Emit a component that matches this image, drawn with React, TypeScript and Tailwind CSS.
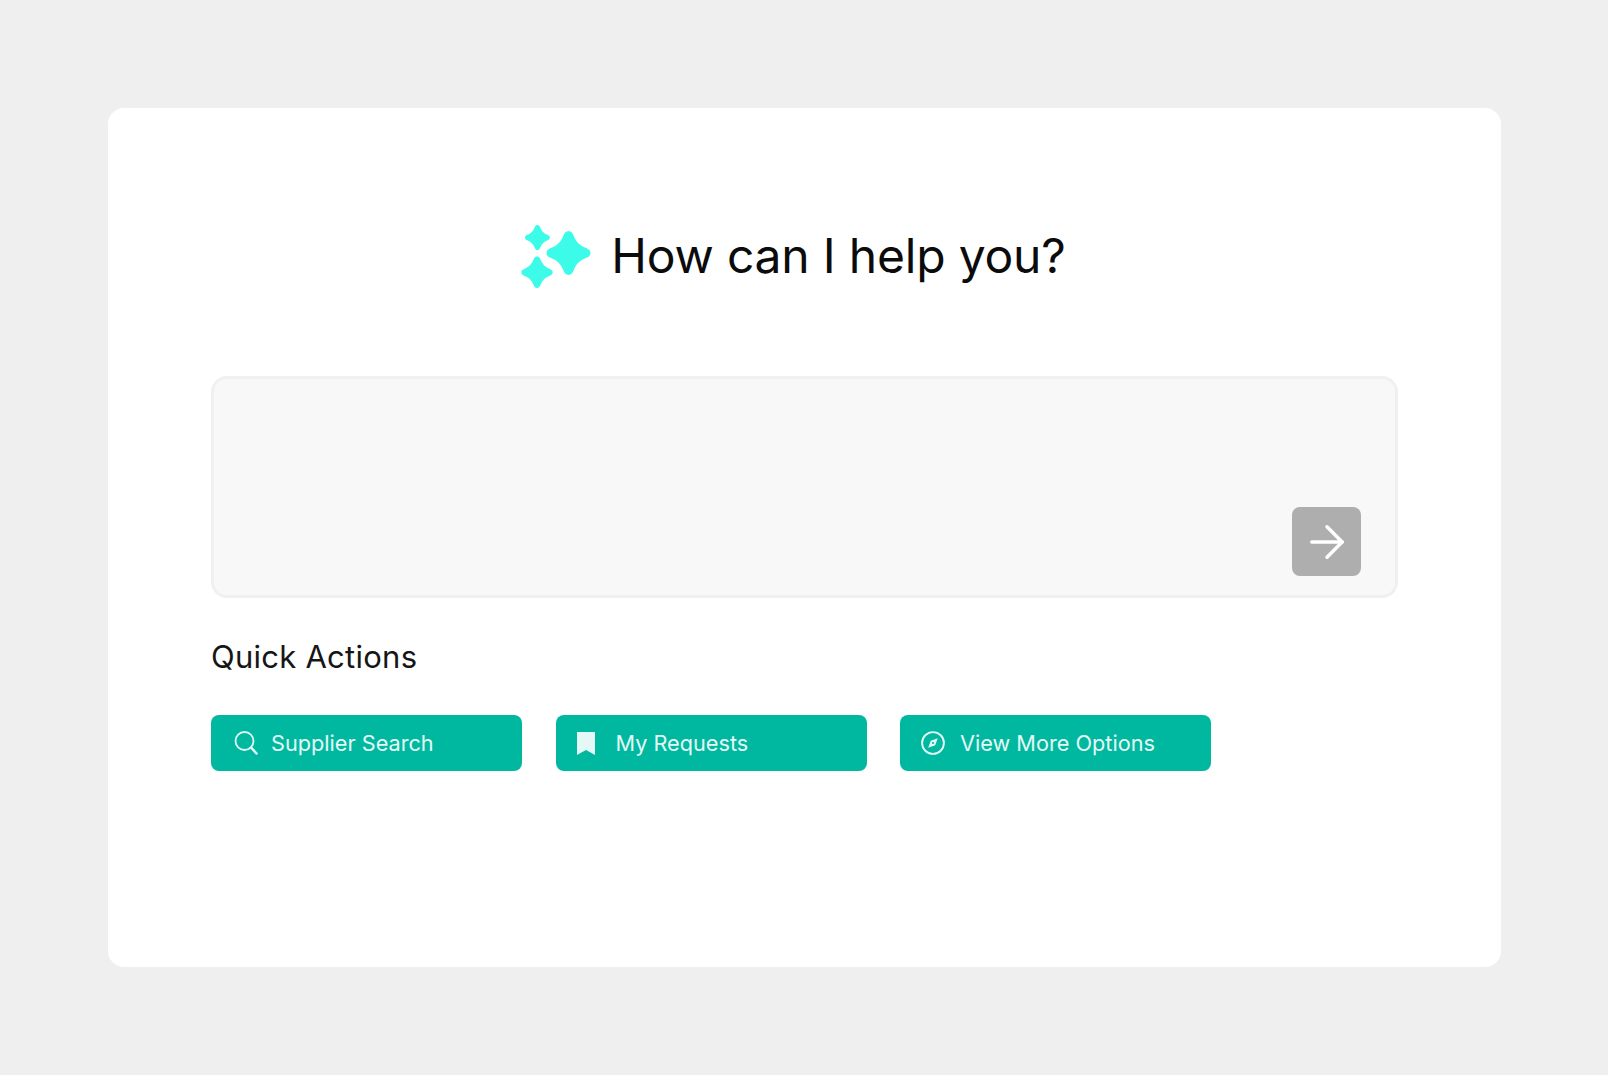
import React from "react";
import { ArrowRight } from "lucide-react";

const font = "font-['Inter','Noto_Sans',sans-serif]";
const star =
  "M0 -10C1.300 -10 1.900 -9 2.500 -7.500C3.400 -5.200 5.200 -3.400 7.500 -2.500C9 -1.900 10 -1.300 10 0C10 1.300 9 1.900 7.500 2.500C5.200 3.400 3.400 5.200 2.500 7.500C1.900 9 1.300 10 0 10C-1.300 10 -1.900 9 -2.500 7.500C-3.400 5.200 -5.200 3.400 -7.500 2.500C-9 1.900 -10 1.300 -10 0C-10 -1.300 -9 -1.900 -7.500 -2.500C-5.200 -3.400 -3.400 -5.200 -2.500 -7.500C-1.900 -9 -1.300 -10 0 -10Z";

function Sparkles() {
  return (
    <svg width="70" height="63" viewBox="0 0 70 63" className="shrink-0">
      <path fill="#3dfbe9" transform="translate(16.400 12.500) scale(1.25)" d={star} />
      <path fill="#3dfbe9" transform="translate(47.500 28) scale(2.2)" d={star} />
      <path fill="#3dfbe9" transform="translate(16 47.300) scale(1.57)" d={star} />
    </svg>
  );
}

function SearchIcon() {
  return (
    <svg width="24" height="24" viewBox="0 0 24 24" fill="none" stroke="currentColor" className="translate-x-[1px] shrink-0">
      <circle cx="10.500" cy="10" r="9" strokeWidth="1.800" />
      <path d="M17 16.500L22.500 22.500" strokeWidth="2.500" strokeLinecap="round" />
    </svg>
  );
}

function BookmarkIcon() {
  return (
    <svg width="18" height="23" viewBox="0 0 18 23" fill="currentColor" className="-translate-x-[4px] shrink-0">
      <path d="M0 0H18V23L9 18L0 23Z" />
    </svg>
  );
}

function CompassIcon() {
  return (
    <svg width="24" height="24" viewBox="0 0 24 24" fill="none" className="-translate-x-[1px] shrink-0">
      <circle cx="12" cy="12" r="10.900" stroke="currentColor" strokeWidth="1.900" />
      <path d="M16.800 7.200L14.200 14.200L7.200 16.800L9.800 9.800Z" fill="currentColor" />
      <circle cx="12" cy="12" r="1.100" fill="#00b8a0" />
    </svg>
  );
}

function ActionButton({ icon, label }: { icon: React.ReactNode; label: string }) {
  return (
    <button className="flex h-14 w-[311px] items-center gap-[14px] rounded-lg bg-[#00b8a0] pl-[22px] text-[21.7px] text-[#e4f8f5]">
      <span className="flex w-6 items-center justify-center">{icon}</span>
      <span>{label}</span>
    </button>
  );
}

export default function App() {
  return (
    <div className={`${font} min-h-[1075px] bg-[#efefef] pt-[108px] pl-[108px]`}>
      <div className="flex h-[859px] w-[1393px] flex-col rounded-2xl bg-white px-[103px] pt-[117px]">
        <div className="flex items-center justify-center gap-[20px] pr-[22px]">
          <Sparkles />
          <h1 className="pb-[2px] text-[48px] leading-[60px] font-normal tracking-[-0.2px] text-[#0b0b0b]">How can I help you?</h1>
        </div>
        <div className="mt-[88px] flex h-[222px] items-end justify-end rounded-2xl border-[3px] border-[#f0f0f0] bg-[#f8f8f8] pr-[34px] pb-[19px]">
          <button className="flex h-[69px] w-[69px] items-center justify-center rounded-lg bg-[#aeaeae] text-white">
            <ArrowRight size={52} strokeWidth={1.6} />
          </button>
        </div>
        <h2 className="mt-[39px] text-[31px] leading-[40px] font-normal tracking-[0.25px] text-[#161616]">Quick Actions</h2>
        <div className="mt-[38px] flex gap-[33.5px]">
          <ActionButton icon={<SearchIcon />} label="Supplier Search" />
          <ActionButton icon={<BookmarkIcon />} label="My Requests" />
          <ActionButton icon={<CompassIcon />} label="View More Options" />
        </div>
      </div>
    </div>
  );
}
